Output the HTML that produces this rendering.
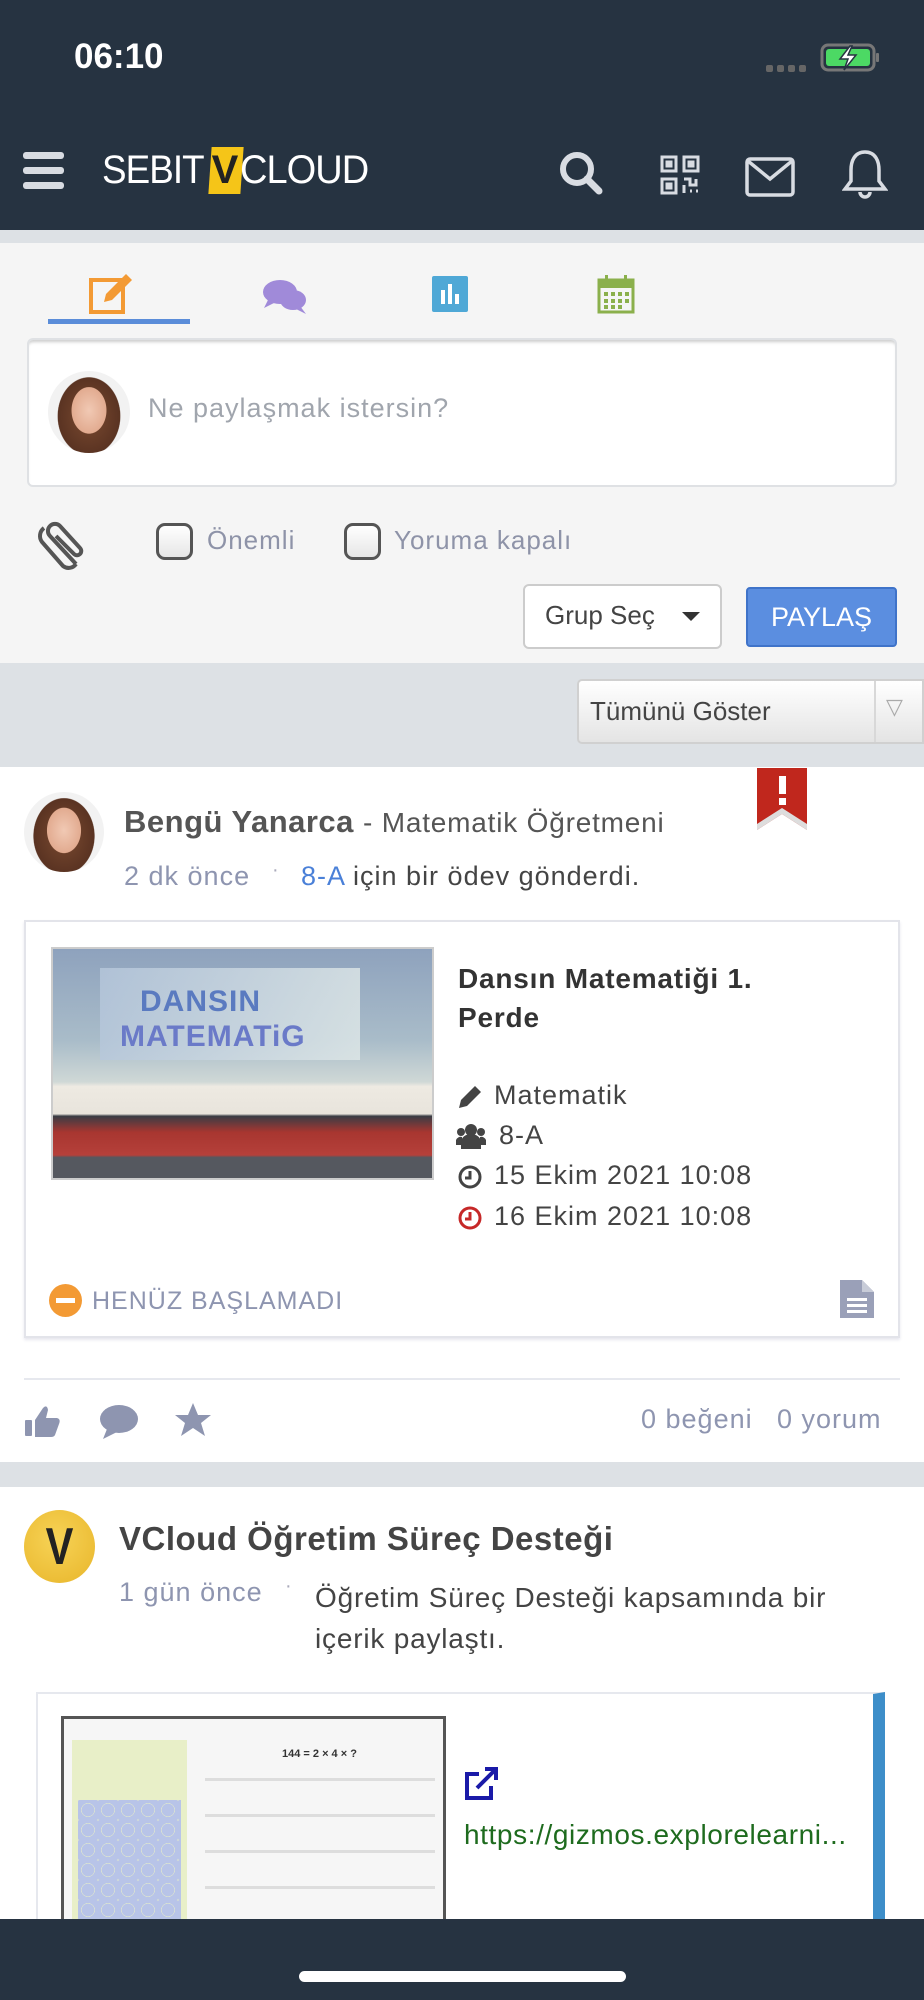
<!DOCTYPE html>
<html><head><meta charset="utf-8"><style>
*{margin:0;padding:0;box-sizing:border-box}
body{width:924px;height:2000px;position:relative;overflow:hidden;background:#dde1e5;font-family:"Liberation Sans",sans-serif}
.a{position:absolute}
.t{position:absolute;white-space:nowrap;letter-spacing:1px}
.av{border-radius:50%;background:radial-gradient(ellipse 30% 40% at 50% 48%,#f1c9b4 0,#e2ab90 70%,transparent 72%),radial-gradient(ellipse 42% 52% at 50% 55%,#7a4a30 0,#5a3322 90%,transparent 92%),#f2f2f2}
</style></head><body>
<!-- header -->
<div class="a" style="left:0;top:0;width:924px;height:230px;background:#263341"></div>
<div class="t" style="left:74px;top:37px;font-size:35px;color:#fff;font-weight:bold;letter-spacing:0">06:10</div>
<div class="a" style="left:766px;top:65px;width:40px;height:8px;display:flex;gap:4px"><i style="width:7px;height:7px;background:#666;border-radius:2px"></i><i style="width:7px;height:7px;background:#666;border-radius:2px"></i><i style="width:7px;height:7px;background:#666;border-radius:2px"></i><i style="width:7px;height:7px;background:#666;border-radius:2px"></i></div>
<svg class="a" style="left:820px;top:43px" width="62" height="30" viewBox="0 0 62 30"><rect x="2" y="2" width="52" height="25" rx="6" fill="none" stroke="#777" stroke-width="3"/><rect x="6" y="6" width="44" height="17" rx="3" fill="#4cd964"/><rect x="56" y="10" width="3" height="9" rx="1" fill="#777"/><path d="M30 3 L20 16 H28 L24 27 L36 12 H28 L32 3Z" fill="#fff" stroke="#263341" stroke-width="1.5"/></svg>
<div class="a" style="left:23px;top:152px;width:41px;height:7px;background:#d8dce2;border-radius:3px"></div>
<div class="a" style="left:23px;top:167px;width:41px;height:7px;background:#d8dce2;border-radius:3px"></div>
<div class="a" style="left:23px;top:182px;width:41px;height:7px;background:#d8dce2;border-radius:3px"></div>
<div class="t" style="left:102px;top:148px;font-size:40px;color:#fff;letter-spacing:-1px;transform:scaleX(0.92);transform-origin:left">SEBIT</div>
<div class="a" style="left:210px;top:147px;width:32px;height:47px;background:#f5c518;transform:skewX(-4deg)"></div>
<div class="t" style="left:210px;top:148px;font-size:40px;color:#222;font-weight:bold;width:30px;text-align:center;letter-spacing:0">V</div>
<div class="t" style="left:240px;top:148px;font-size:40px;color:#fff;letter-spacing:-1px;transform:scaleX(0.95);transform-origin:left">CLOUD</div>
<svg class="a" style="left:557px;top:149px" width="48" height="48" viewBox="0 0 48 48"><circle cx="20" cy="20" r="14" fill="none" stroke="#d8dce2" stroke-width="6"/><path d="M30 30 L42 42" stroke="#d8dce2" stroke-width="7" stroke-linecap="round"/></svg>
<svg class="a" style="left:660px;top:155px" width="40" height="40" viewBox="0 0 40 40" fill="none" stroke="#d8dce2" stroke-width="3"><rect x="2" y="2" width="14" height="14"/><rect x="24" y="2" width="14" height="14"/><rect x="2" y="24" width="14" height="14"/><rect x="7" y="7" width="4" height="4" fill="#d8dce2"/><rect x="29" y="7" width="4" height="4" fill="#d8dce2"/><rect x="7" y="29" width="4" height="4" fill="#d8dce2"/><path d="M24 24h6v6h6v-6M24 30v8M30 36h2M36 36h2"/></svg>
<svg class="a" style="left:745px;top:157px" width="50" height="40" viewBox="0 0 50 40" fill="none" stroke="#d8dce2" stroke-width="3.5"><rect x="2" y="2" width="46" height="36" rx="3"/><path d="M3 4 L25 22 L47 4"/></svg>
<svg class="a" style="left:842px;top:148px" width="46" height="52" viewBox="0 0 46 52" fill="none" stroke="#d8dce2" stroke-width="3.5"><path d="M23 4 C12 4 9 14 9 22 V33 L3 41 H43 L37 33 V22 C37 14 34 4 23 4Z"/><path d="M18 44 a5 5 0 0 0 10 0"/></svg>
<!-- compose -->
<div class="a" style="left:0;top:243px;width:924px;height:420px;background:#f5f5f5"></div>
<svg class="a" style="left:88px;top:272px" width="46" height="42" viewBox="0 0 46 42"><rect x="3" y="8" width="32" height="32" fill="none" stroke="#f39a34" stroke-width="4"/><path d="M16 30 L18 22 L38 2 L44 8 L24 28Z" fill="#f39a34"/></svg>
<div class="a" style="left:48px;top:319px;width:142px;height:5px;background:#5b8dd9"></div>
<svg class="a" style="left:262px;top:278px" width="46" height="38" viewBox="0 0 46 38" fill="#a08ad9"><ellipse cx="18" cy="14" rx="17" ry="12"/><path d="M6 22 L2 30 L14 24Z"/><ellipse cx="31" cy="22" rx="13" ry="10"/><path d="M38 28 L44 36 L32 30Z"/></svg>
<svg class="a" style="left:432px;top:276px" width="36" height="36" viewBox="0 0 36 36"><rect width="36" height="36" rx="2" fill="#4fa8d6"/><rect x="9" y="14" width="4" height="14" fill="#fff"/><rect x="16" y="8" width="4" height="20" fill="#fff"/><rect x="23" y="18" width="4" height="10" fill="#fff"/></svg>
<svg class="a" style="left:597px;top:274px" width="38" height="40" viewBox="0 0 38 40"><rect x="2" y="6" width="34" height="32" fill="none" stroke="#8bb04c" stroke-width="3"/><rect x="2" y="6" width="34" height="8" fill="#8bb04c"/><rect x="8" y="1" width="3" height="9" fill="#8bb04c"/><rect x="27" y="1" width="3" height="9" fill="#8bb04c"/><g fill="#8bb04c"><rect x="7" y="18" width="4" height="4"/><rect x="14" y="18" width="4" height="4"/><rect x="21" y="18" width="4" height="4"/><rect x="28" y="18" width="4" height="4"/><rect x="7" y="25" width="4" height="4"/><rect x="14" y="25" width="4" height="4"/><rect x="21" y="25" width="4" height="4"/><rect x="28" y="25" width="4" height="4"/><rect x="7" y="31" width="4" height="4"/><rect x="14" y="31" width="4" height="4"/><rect x="21" y="31" width="4" height="4"/></g></svg>
<div class="a" style="left:27px;top:338px;width:870px;height:149px;background:#fff;border:2px solid #dfe1e4;border-radius:6px;box-shadow:inset 0 4px 3px -2px #ccc"></div>
<div class="a av" style="left:48px;top:371px;width:82px;height:82px"></div>
<div class="t" style="left:148px;top:393px;font-size:27px;color:#a0a5ad">Ne paylaşmak istersin?</div>
<svg class="a" style="left:36px;top:520px" width="50" height="52" viewBox="0 0 50 52" fill="none" stroke="#555" stroke-width="4"><path d="M40 44 L14 16 a7 7 0 0 1 10 -10 L44 28 a4 4 0 0 1 -6 6 L20 16"/><path d="M40 44 a9 9 0 0 1 -13 2 L6 22 a10 10 0 0 1 2 -14"/></svg>
<div class="a" style="left:156px;top:523px;width:37px;height:37px;border:3px solid #555;border-radius:9px;background:linear-gradient(#fff,#e6e6e6)"></div>
<div class="t" style="left:207px;top:525px;font-size:26px;color:#8e93a8">Önemli</div>
<div class="a" style="left:344px;top:523px;width:37px;height:37px;border:3px solid #555;border-radius:9px;background:linear-gradient(#fff,#e6e6e6)"></div>
<div class="t" style="left:394px;top:525px;font-size:26px;color:#8e93a8">Yoruma kapalı</div>
<div class="a" style="left:523px;top:584px;width:199px;height:65px;background:#fff;border:2px solid #ccc;border-radius:6px"></div>
<div class="t" style="left:545px;top:600px;font-size:26px;color:#444;letter-spacing:0">Grup Seç</div>
<div class="a" style="left:682px;top:612px;border-left:9px solid transparent;border-right:9px solid transparent;border-top:9px solid #333"></div>
<div class="a" style="left:746px;top:587px;width:151px;height:60px;background:#5b8ee0;border:2px solid #3f73c9;border-radius:4px;color:#fff;font-size:27px;text-align:center;line-height:56px">PAYLAŞ</div>
<!-- filter -->
<div class="a" style="left:577px;top:679px;width:347px;height:65px;background:linear-gradient(#fff,#e4e4e4);border:2px solid #d0d0d0;border-radius:5px 0 0 5px"></div>
<div class="a" style="left:874px;top:681px;width:2px;height:61px;background:#d8d8d8"></div>
<div class="t" style="left:590px;top:696px;font-size:26px;color:#444;letter-spacing:0">Tümünü Göster</div>
<div class="t" style="left:886px;top:694px;font-size:22px;color:#aaa">▽</div>
<!-- post 1 -->
<div class="a" style="left:0;top:767px;width:924px;height:695px;background:#fff"></div>
<div class="a av" style="left:24px;top:792px;width:80px;height:80px"></div>
<div class="t" style="left:124px;top:804px;font-size:31px;color:#555;font-weight:bold;letter-spacing:0.5px">Bengü Yanarca <span style="font-weight:normal;font-size:28px;letter-spacing:0.8px">- Matematik Öğretmeni</span></div>
<svg class="a" style="left:757px;top:768px" width="50" height="62" viewBox="0 0 50 62"><path d="M0 0H50V62L25 46L0 62Z" fill="#c0271d"/><path d="M0 56 L25 40 L50 56 V62 L25 46 L0 62Z" fill="#ddd"/><rect x="22" y="8" width="7" height="18" fill="#fff"/><rect x="22" y="30" width="7" height="7" fill="#fff"/></svg>
<div class="t" style="left:124px;top:861px;font-size:27px;color:#8e95b0">2 dk önce</div>
<div class="t" style="left:272px;top:859px;font-size:20px;color:#aab">·</div>
<div class="t" style="left:301px;top:861px;font-size:27px;color:#444"><span style="color:#4a80d8">8-A</span> için bir ödev gönderdi.</div>
<div class="a" style="left:24px;top:920px;width:876px;height:418px;border:2px solid #e3e4ea;box-shadow:0 2px 3px #e6e6ee"></div>
<div class="a" style="left:51px;top:947px;width:383px;height:233px;border:2px solid #ccc;background:linear-gradient(#8ea2bd 0,#a9bcc9 40%,#cfd8d6 58%,#eeeae2 60%,#e8e4dc 72%,#3a3d45 73%,#a83630 80%,#b5403a 90%,#55585f 91%)"></div>
<div class="a" style="left:100px;top:968px;width:260px;height:92px;background:linear-gradient(90deg,#b7c8dc,#dfe8e8);opacity:.8"></div>
<div class="t" style="left:140px;top:985px;font-size:30px;color:#5a7ac0;font-weight:bold">DANSIN</div>
<div class="t" style="left:120px;top:1020px;font-size:30px;color:#6a7ac8;font-weight:bold">MATEMATiG</div>
<div class="t" style="left:458px;top:959px;font-size:28px;color:#333;font-weight:bold;line-height:39px;letter-spacing:0.8px">Dansın Matematiği 1.<br>Perde</div>
<svg class="a" style="left:457px;top:1084px" width="26" height="26" viewBox="0 0 26 26"><path d="M2 24 L4 16 L18 2 L24 8 L10 22Z" fill="#444"/></svg>
<div class="t" style="left:494px;top:1080px;font-size:27px;color:#444">Matematik</div>
<svg class="a" style="left:456px;top:1123px" width="30" height="26" viewBox="0 0 30 26" fill="#444"><circle cx="15" cy="7" r="6"/><circle cx="5" cy="9" r="4"/><circle cx="25" cy="9" r="4"/><path d="M5 26 V19 a10 8 0 0 1 20 0 V26Z"/><path d="M0 22 V17 a5 5 0 0 1 6 -3 V22Z M30 22 V17 a5 5 0 0 0 -6 -3 V22Z"/></svg>
<div class="t" style="left:499px;top:1120px;font-size:27px;color:#444">8-A</div>
<svg class="a" style="left:457px;top:1164px" width="26" height="26" viewBox="0 0 26 26" fill="none" stroke="#444" stroke-width="3"><circle cx="13" cy="13" r="10"/><path d="M13 7 V14 H8"/></svg>
<div class="t" style="left:494px;top:1160px;font-size:27px;color:#444">15 Ekim 2021 10:08</div>
<svg class="a" style="left:457px;top:1205px" width="26" height="26" viewBox="0 0 26 26" fill="none" stroke="#c62828" stroke-width="3"><circle cx="13" cy="13" r="10"/><path d="M13 7 V14 H8"/></svg>
<div class="t" style="left:494px;top:1201px;font-size:27px;color:#444">16 Ekim 2021 10:08</div>
<div class="a" style="left:49px;top:1284px;width:33px;height:33px;border-radius:50%;background:#f39a34"></div>
<div class="a" style="left:56px;top:1298px;width:19px;height:5px;background:#fff"></div>
<div class="t" style="left:92px;top:1287px;font-size:25px;color:#8e95b0">HENÜZ BAŞLAMADI</div>
<svg class="a" style="left:840px;top:1280px" width="34" height="38" viewBox="0 0 34 38"><path d="M0 0H22L34 12V38H0Z" fill="#9aa0b8"/><path d="M22 0V12H34" fill="#c8ccd8"/><rect x="7" y="18" width="20" height="3" fill="#fff"/><rect x="7" y="24" width="20" height="3" fill="#fff"/><rect x="7" y="30" width="20" height="3" fill="#fff"/></svg>
<div class="a" style="left:24px;top:1378px;width:876px;height:2px;background:#e6e8ee"></div>
<svg class="a" style="left:25px;top:1404px" width="36" height="34" viewBox="0 0 36 34" fill="#8e95b0"><rect x="0" y="16" width="7" height="16" rx="1"/><path d="M10 16 L18 4 Q22 0 23 6 L21 14 H32 Q36 15 34 20 L30 31 Q29 33 26 33 H10Z"/></svg>
<svg class="a" style="left:99px;top:1404px" width="40" height="36" viewBox="0 0 40 36" fill="#8e95b0"><ellipse cx="20" cy="15" rx="19" ry="14"/><path d="M8 25 L4 35 L18 28Z"/></svg>
<svg class="a" style="left:174px;top:1402px" width="38" height="36" viewBox="0 0 38 36" fill="#8e95b0"><path d="M19 1 L24 13 L37 13 L27 21 L31 34 L19 26 L7 34 L11 21 L1 13 L14 13Z"/></svg>
<div class="t" style="left:641px;top:1404px;font-size:27px;color:#8e95b0">0 beğeni</div>
<div class="t" style="left:777px;top:1404px;font-size:27px;color:#8e95b0">0 yorum</div>
<!-- post 2 -->
<div class="a" style="left:0;top:1487px;width:924px;height:440px;background:#fff"></div>
<div class="a" style="left:24px;top:1510px;width:71px;height:73px;border-radius:50%;background:radial-gradient(circle at 45% 40%,#f7d356,#e8b52a)"></div>
<div class="t" style="left:24px;top:1517px;width:71px;text-align:center;font-size:52px;color:#222;font-weight:bold;transform:scaleX(0.8);letter-spacing:0">V</div>
<div class="t" style="left:119px;top:1520px;font-size:33px;color:#444;font-weight:bold;letter-spacing:0.5px">VCloud Öğretim Süreç Desteği</div>
<div class="t" style="left:119px;top:1577px;font-size:27px;color:#8e95b0">1 gün önce</div>
<div class="t" style="left:285px;top:1575px;font-size:20px;color:#aab">·</div>
<div class="t" style="left:315px;top:1577px;font-size:28px;color:#444;line-height:41px;letter-spacing:0.8px">Öğretim Süreç Desteği kapsamında bir<br>içerik paylaştı.</div>
<div class="a" style="left:36px;top:1692px;width:849px;height:240px;border:2px solid #e6e8ee;border-right:12px solid #3d8ec9"></div>
<div class="a" style="left:61px;top:1716px;width:385px;height:220px;border:3px solid #555;background:#f6f6f6"></div>
<div class="a" style="left:72px;top:1740px;width:115px;height:200px;background:#e8efc8"></div>
<div class="a" style="left:78px;top:1800px;width:103px;height:140px;background:repeating-radial-gradient(circle at 10px 10px,#b8c4e8 0 6px,transparent 7px);background-size:20px 20px"></div>
<div class="a" style="left:205px;top:1745px;width:230px;height:190px;background:repeating-linear-gradient(#f6f6f6 0 33px,#ddd 33px 36px)"></div>
<div class="t" style="left:282px;top:1748px;font-size:11px;color:#333;font-weight:bold;letter-spacing:0">144 = 2 × 4 × ?</div>
<svg class="a" style="left:463px;top:1766px" width="36" height="36" viewBox="0 0 36 36" fill="none" stroke="#1a1aa8" stroke-width="4"><path d="M16 8 H4 V32 H28 V20"/><path d="M14 22 L32 4 M22 3 H33 V14"/></svg>
<div class="t" style="left:464px;top:1819px;font-size:28px;color:#1e6b1e;letter-spacing:0.6px">https://gizmos.explorelearni...</div>
<!-- bottom bar -->
<div class="a" style="left:0;top:1919px;width:924px;height:81px;background:#263341"></div>
<div class="a" style="left:299px;top:1971px;width:327px;height:11px;background:#fff;border-radius:6px"></div>
</body></html>
